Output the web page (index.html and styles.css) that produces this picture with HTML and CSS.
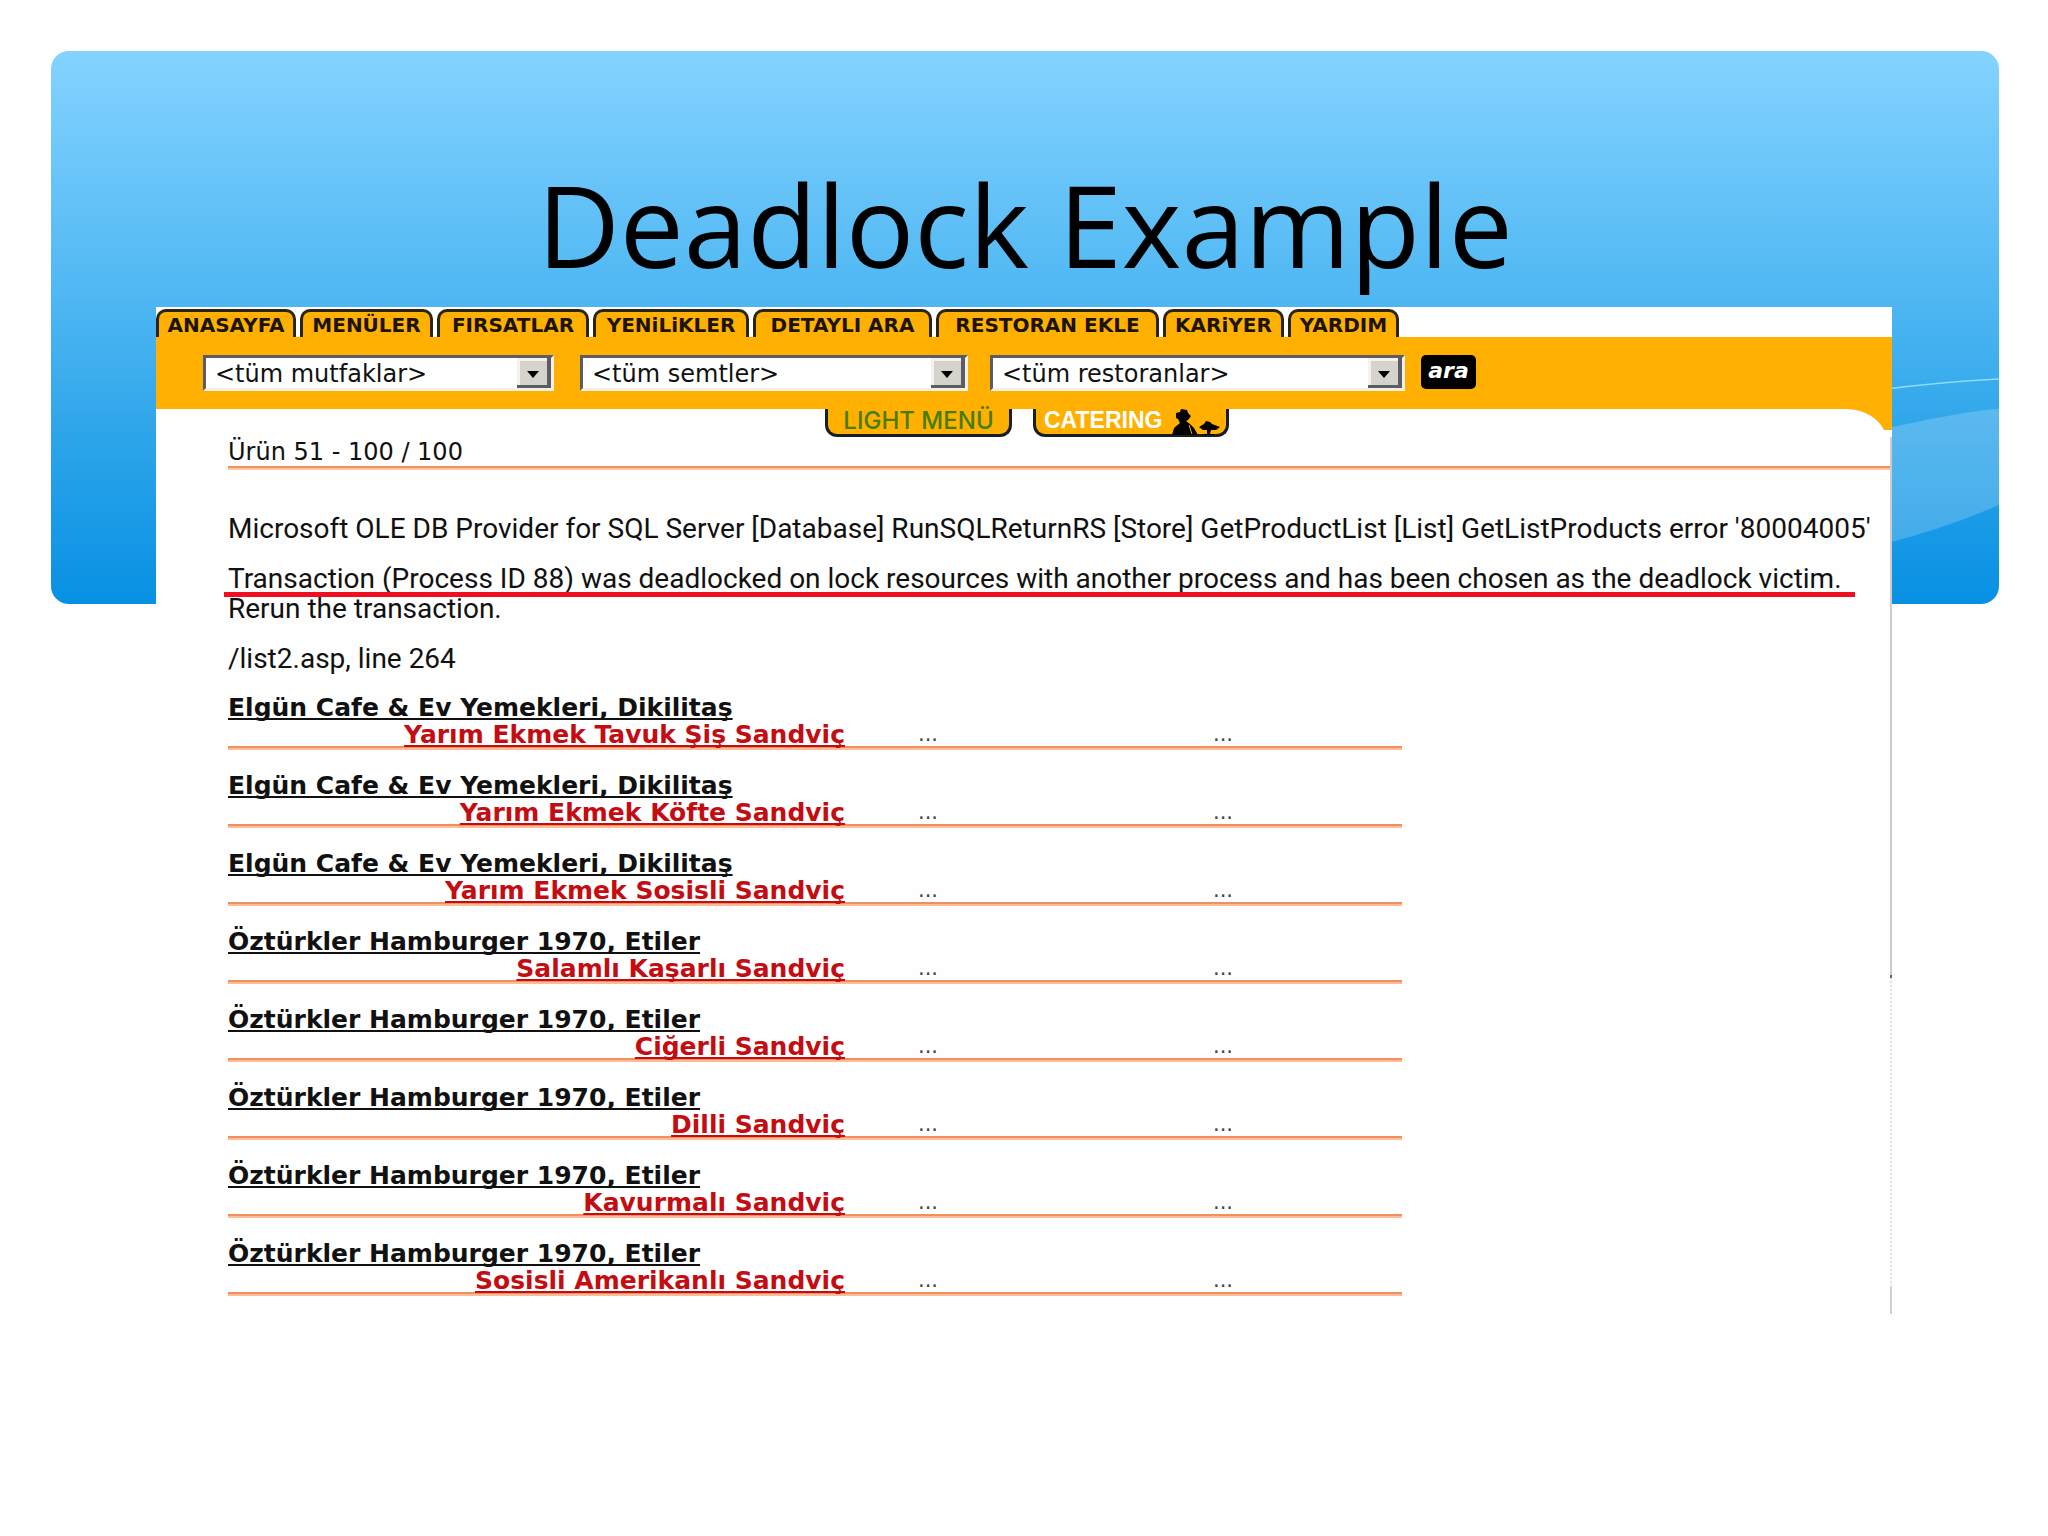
FILE: index.html
```html
<!DOCTYPE html>
<html lang="tr">
<head>
<meta charset="utf-8">
<title>Deadlock Example</title>
<link rel="stylesheet" href="styles.css">
</head>
<body>
<main class="slide">
  <header class="hero">
    <svg class="waves" viewBox="0 0 120 553" aria-hidden="true">
      <path d="M0 339 Q60 331 120 328" fill="none" stroke="#8fdcfb" stroke-width="1.5"/>
      <path d="M0 379 Q90 359 120 358 V454 Q60 480 0 494 Z" fill="#fff" fill-opacity=".2"/>
    </svg>
    <h1 class="title">Deadlock Example</h1>
  </header>

  <section class="panel">
    <nav class="tabs">
      <a class="tab tab-1" href="#">ANASAYFA</a>
      <a class="tab tab-2" href="#">MENÜLER</a>
      <a class="tab tab-3" href="#">FIRSATLAR</a>
      <a class="tab tab-4" href="#">YENiLiKLER</a>
      <a class="tab tab-5" href="#">DETAYLI ARA</a>
      <a class="tab tab-6" href="#">RESTORAN EKLE</a>
      <a class="tab tab-7" href="#">KARiYER</a>
      <a class="tab tab-8" href="#">YARDIM</a>
    </nav>

    <form class="search">
      <select class="pick pick-kitchen" aria-label="Mutfak"><option>&lt;tüm mutfaklar&gt;</option></select>
      <select class="pick pick-area" aria-label="Semt"><option>&lt;tüm semtler&gt;</option></select>
      <select class="pick pick-place" aria-label="Restoran"><option>&lt;tüm restoranlar&gt;</option></select>
      <button class="go" type="button">ara</button>
    </form>

    <nav class="subnav">
      <a class="flap flap-light" href="#">LIGHT MENÜ</a>
      <a class="flap flap-catering" href="#">CATERING
        <svg class="cook" viewBox="0 0 50 27" aria-hidden="true">
          <path d="M4 4 L8 3 L9 0 L15 1 L16 4 L19 7 L16 11 L14 12 L18 15 L22 19 L26 26 H0 L2 19 L8 14 L6 10 L4 9 Z"/>
          <path d="M27 18 L32 15 L34 12 L38 13 L40 15 L48 18 L44 21 L39 21 L38 25 H42 V26 H32 V25 H35 L35 21 L31 21 Z"/>
          <path d="M17 16 L20 25" stroke="#ffb000" fill="none"/>
        </svg>
      </a>
      <svg class="corner" viewBox="0 0 44 21" aria-hidden="true"><path d="M0 0 H44 V21 H36 Q26 2 0 0 Z" fill="#ffb000"/></svg>
    </nav>

    <div class="content">
      <p class="count">Ürün 51 - 100 / 100</p>

      <div class="error">
        <p class="source">Microsoft OLE DB Provider for SQL Server [Database] RunSQLReturnRS [Store] GetProductList [List] GetListProducts error '80004005'</p>
        <p class="message"><mark class="marked">Transaction (Process ID 88) was deadlocked on lock resources with another process and has been chosen as the deadlock victim.</mark>Rerun the transaction.</p>
        <p class="place">/list2.asp, line 264</p>
      </div>

      <table class="items">
        <colgroup><col class="col-product"><col class="col-a"><col class="col-b"></colgroup>
        <tbody><tr><th colspan="3"><a href="#">Elgün Cafe &amp; Ev Yemekleri, Dikilitaş</a></th></tr>
        <tr class="product"><td><a href="#">Yarım Ekmek Tavuk Şiş Sandviç</a></td><td>...</td><td>...</td></tr></tbody>
        <tbody><tr><th colspan="3"><a href="#">Elgün Cafe &amp; Ev Yemekleri, Dikilitaş</a></th></tr>
        <tr class="product"><td><a href="#">Yarım Ekmek Köfte Sandviç</a></td><td>...</td><td>...</td></tr></tbody>
        <tbody><tr><th colspan="3"><a href="#">Elgün Cafe &amp; Ev Yemekleri, Dikilitaş</a></th></tr>
        <tr class="product"><td><a href="#">Yarım Ekmek Sosisli Sandviç</a></td><td>...</td><td>...</td></tr></tbody>
        <tbody><tr><th colspan="3"><a href="#">Öztürkler Hamburger 1970, Etiler</a></th></tr>
        <tr class="product"><td><a href="#">Salamlı Kaşarlı Sandviç</a></td><td>...</td><td>...</td></tr></tbody>
        <tbody><tr><th colspan="3"><a href="#">Öztürkler Hamburger 1970, Etiler</a></th></tr>
        <tr class="product"><td><a href="#">Ciğerli Sandviç</a></td><td>...</td><td>...</td></tr></tbody>
        <tbody><tr><th colspan="3"><a href="#">Öztürkler Hamburger 1970, Etiler</a></th></tr>
        <tr class="product"><td><a href="#">Dilli Sandviç</a></td><td>...</td><td>...</td></tr></tbody>
        <tbody><tr><th colspan="3"><a href="#">Öztürkler Hamburger 1970, Etiler</a></th></tr>
        <tr class="product"><td><a href="#">Kavurmalı Sandviç</a></td><td>...</td><td>...</td></tr></tbody>
        <tbody><tr><th colspan="3"><a href="#">Öztürkler Hamburger 1970, Etiler</a></th></tr>
        <tr class="product"><td><a href="#">Sosisli Amerikanlı Sandviç</a></td><td>...</td><td>...</td></tr></tbody>
      </table>
    </div>
  </section>
</main>
</body>
</html>
```
FILE: styles.css
```css
* { box-sizing: border-box; }

body {
  margin: 0;
  background: #fefefe;
  color: #111;
  font-family: "Liberation Sans", Arial, sans-serif;
}

p, h1 { margin: 0; }
a { color: inherit; }

/* The panel starts inside the hero and runs on below it. */
.slide {
  display: grid;
  grid-template-columns: minmax(0, 1fr);
  grid-template-rows: 256px 297px auto;
  padding: 51px 49px 51px 51px;
}

.hero {
  grid-area: 1 / 1 / 3 / 2;
  position: relative;
  overflow: hidden;
  border-radius: 18px;
  background: linear-gradient(#84d3ff, #4db6f2 46%, #2fa6ea 68%, #0790e3);
}

.waves {
  position: absolute;
  top: 0;
  right: 0;
  width: 120px;
  height: 553px;
}

.title {
  padding-top: 105px;
  font: 400 114px/136px "Open Sans", "Noto Sans", sans-serif;
  color: #000;
  text-align: center;
}

.panel {
  grid-area: 2 / 1 / 4 / 2;
  position: relative;
  margin: 0 107px 0 105px;
  padding-bottom: 18px;
  background: #fefefe;
}

/* Edge of the scroll bar: solid, dotted, solid */
.panel::after {
  content: "";
  position: absolute;
  top: 130px;
  right: 0;
  bottom: 0;
  width: 2px;
  background:
    linear-gradient(#cfcbcb, #cfcbcb) 0 0 / 2px 538px no-repeat,
    linear-gradient(#666, #666) 0 538px / 2px 3px no-repeat,
    linear-gradient(#cfcfcf, #cfcfcf) 0 100% / 2px 27px no-repeat,
    repeating-linear-gradient(#e4e4e4 0 2px, #f8f8f8 2px 4px);
}

.tabs {
  display: flex;
  gap: 4px;
  padding-top: 2px;
  background: #fff;
}

.tab {
  height: 28px;
  border: 3px solid #2b2410;
  border-bottom: 0;
  border-radius: 10px 10px 0 0;
  background: #ffb000;
  color: #1c1400;
  font-family: "DejaVu Sans", Verdana, sans-serif;
  font-size: 20px;
  font-weight: 700;
  line-height: 26px;
  text-align: center;
  text-decoration: none;
  white-space: nowrap;
}

.tab-1 { width: 140px; }
.tab-2 { width: 133px; }
.tab-3 { width: 152px; }
.tab-4 { width: 156px; }
.tab-5 { width: 179px; }
.tab-6 { width: 223px; }
.tab-7 { width: 121px; }
.tab-8 { width: 111px; }

.search {
  display: flex;
  align-items: flex-start;
  height: 72px;
  padding: 18px 0 0 47px;
  background: #ffb000;
}

.pick {
  height: 36px;
  padding: 2px 40px 0 9px;
  border: 3px solid;
  border-color: #5c5c66 #f3f0e6 #f3f0e6 #5c5c66;
  border-radius: 0;
  appearance: none;
  background: #fff url("data:image/svg+xml,%3Csvg xmlns='http://www.w3.org/2000/svg' width='34' height='30'%3E%3Cpath fill='%23d6d3cc' d='M0 0h34v30H0z'/%3E%3Cpath fill='%23f4f2ee' d='M0 0h34v3H3v27H0z'/%3E%3Cpath fill='%235c5c66' d='M34 0v30H0v-3h30V0z'/%3E%3Cpath d='M10 13h12l-6 7z'/%3E%3C/svg%3E") right center no-repeat;
  color: #111;
  font: 24px/28px "DejaVu Sans", Verdana, sans-serif;
}

.pick-kitchen { width: 351px; margin-right: 26px; }
.pick-area { width: 388px; margin-right: 22px; }
.pick-place { width: 415px; margin-right: 16px; }

.go {
  width: 55px;
  height: 34px;
  padding: 0 0 2px;
  border: 0;
  border-radius: 5px;
  background: #000;
  color: #fff;
  font: italic 700 22px/28px "DejaVu Sans", Verdana, sans-serif;
}

.subnav {
  display: flex;
  align-items: flex-start;
  height: 28px;
  padding-left: 669px;
}

.flap {
  display: flex;
  height: 28px;
  border: 3px solid #1c1c24;
  border-top: 0;
  border-radius: 0 0 12px 12px;
  background: #ffb000;
  line-height: 24px;
  text-decoration: none;
  white-space: nowrap;
}

.flap-light {
  justify-content: center;
  width: 187px;
  margin-right: 21px;
  color: #467c00;
  font-family: Inter, sans-serif;
  font-size: 24px;
  font-weight: 500;
}

.flap-catering {
  width: 196px;
  padding-left: 8px;
  color: #fff;
  font-size: 23px;
  font-weight: 700;
  line-height: 22px;
}

.cook {
  width: 50px;
  height: 27px;
  margin-left: 10px;
}

.corner {
  width: 44px;
  height: 21px;
  margin-left: auto;
}

.content { padding: 0 0 0 72px; }

.count {
  height: 33px;
  background: linear-gradient(#f0905f 50%, #ffc4a4 50%) 0 100% / 100% 4px no-repeat;
  font: 24px/30px "DejaVu Sans", Verdana, sans-serif;
}

.error {
  padding-top: 44px;
  font-family: Roboto, sans-serif;
  font-size: 28px;
  line-height: 30px;
  white-space: nowrap;
}

.message {
  padding-top: 20px;
  line-height: 24px;
}

.marked {
  display: block;
  position: relative;
  width: 1631px;
  height: 33px;
  margin-left: -4px;
  padding-left: 4px;
  background: none;
  color: inherit;
  line-height: 30px;
}

/* Red marker line, drawn over the descenders */
.marked::after {
  content: "";
  position: absolute;
  right: 0;
  bottom: 0;
  left: 0;
  height: 5px;
  background: #ee1020;
}

.place { padding-top: 23px; }

.items {
  width: 1174px;
  margin-top: 21px;
  border-collapse: separate;
  border-spacing: 0;
  table-layout: fixed;
  font-family: "DejaVu Sans", Verdana, sans-serif;
  font-size: 25px;
}

.items a {
  text-decoration-skip-ink: none;
  text-decoration-thickness: 2px;
  text-underline-offset: 2px;
}

.col-product { width: 617px; }
.col-a { width: 295px; }

.items th,
.items td {
  padding: 0;
  text-align: left;
  vertical-align: top;
}

.items th {
  height: 26px;
  line-height: 26px;
}

.items tbody + tbody th { height: 49px; padding-top: 23px; }

.items .product td {
  height: 29px;
  padding-left: 73px;
  background: linear-gradient(#f28f5c 50%, #fdbd98 50%) 0 100% / 100% 4px no-repeat;
  color: #444;
  font-size: 21px;
  line-height: 27px;
}

.items .product td:first-child {
  padding-left: 0;
  color: #c40d12;
  font-size: 25px;
  font-weight: 700;
  text-align: right;
}
```
